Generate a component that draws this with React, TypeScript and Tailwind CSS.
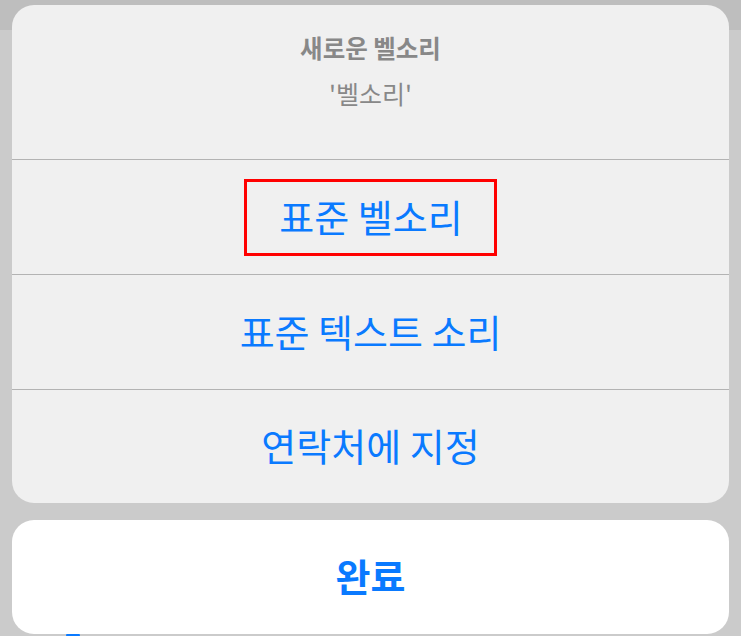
import React from "react";

const font = { fontFamily: '"Noto Sans CJK KR", "Noto Sans", sans-serif' };

function Row({ children }: { children: React.ReactNode }) {
  return (
    <div className="flex h-[115px] items-center justify-center border-t border-[#b3b3b3] pb-[4px] text-[38px] text-[#0a7aff]">
      {children}
    </div>
  );
}

export default function App() {
  return (
    <div
      className="relative h-[636px] w-[741px] overflow-hidden bg-[linear-gradient(#bebebe_0px,#bebebe_30px,#cbcbcb_30px)] pt-[5px]"
      style={font}
    >
      <div className="absolute left-[66px] top-[631px] h-[10px] w-[14px] rounded-full bg-[#0a7aff]" />
      <div className="relative mx-[12px] flex h-[498px] flex-col overflow-hidden rounded-[22px] bg-[#f0f0f0]">
        <div className="flex h-[154px] flex-col items-center pt-[30px]">
          <div className="text-[24.5px] font-bold leading-[26px] text-[#888888]">새로운 벨소리</div>
          <div className="mt-[19px] text-[25px] leading-[26px] text-[#888888]">'벨소리'</div>
        </div>
        <div className="flex h-[115px] items-center justify-center border-t border-[#b3b3b3] text-[38px] text-[#0a7aff]">
          <span className="flex h-[77px] w-[253px] items-center justify-center border-[3px] border-[#ff0000] pb-[4px] pl-[1px]">
            표준 벨소리
          </span>
        </div>
        <Row>표준 텍스트 소리</Row>
        <div className="flex flex-1 items-center justify-center border-t border-[#b3b3b3] pb-[4px] text-[38px] text-[#0a7aff]">
          연락처에 지정
        </div>
      </div>
      <div className="relative mx-[12px] mt-[17px] flex h-[114px] items-center justify-center rounded-[22px] bg-white pb-[6px] text-[38px] font-bold text-[#0a7aff]">
        완료
      </div>
    </div>
  );
}
